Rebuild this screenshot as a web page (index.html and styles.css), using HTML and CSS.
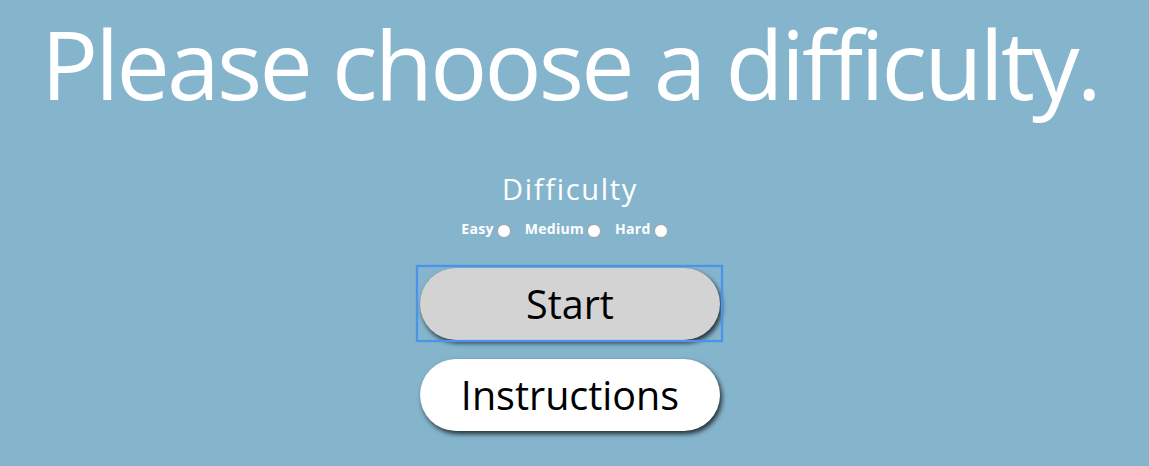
FILE: index.html
```html
<!DOCTYPE html>
<html>
<head>
<meta charset="utf-8">
<link rel="stylesheet" href="styles.css">
</head>
<body>
<main class="page">
  <h1 class="title">Please choose a difficulty.</h1>
  <section class="difficulty">
    <h2 class="difficulty-heading">Difficulty</h2>
    <div class="options">
      <label class="option">Easy<span class="radio"></span></label>
      <label class="option">Medium<span class="radio"></span></label>
      <label class="option">Hard<span class="radio"></span></label>
    </div>
  </section>
  <div class="buttons">
    <button class="btn btn-start">Start</button>
    <button class="btn btn-instructions">Instructions</button>
  </div>
</main>
</body>
</html>
```

FILE: styles.css
```css
html, body {
  margin: 0;
  padding: 0;
  height: 100%;
  background: #85b5cd;
  overflow: hidden;
}
.page {
  font-family: "Open Sans", "DejaVu Sans", sans-serif;
  display: flex;
  flex-direction: column;
  align-items: center;
  color: #fff;
  padding-right: 9px;
}
.title {
  margin: 8px 0 0;
  font-size: 95px;
  font-weight: 400;
  line-height: 110px;
  letter-spacing: -2.8px;
  white-space: nowrap;
}
.difficulty {
  display: flex;
  flex-direction: column;
  align-items: center;
  margin-top: 54px;
}
.difficulty-heading {
  margin: 0;
  font-size: 29px;
  font-weight: 400;
  line-height: 34px;
  letter-spacing: 1.7px;
}
.options {
  display: flex;
  gap: 14px;
  margin-top: 15px;
  padding-right: 11px;
}
.option {
  display: flex;
  align-items: flex-start;
  font-size: 14px;
  font-weight: 700;
  line-height: 16px;
  letter-spacing: 0.3px;
}
.radio {
  width: 14px;
  height: 14px;
  border-radius: 50%;
  background: #fff;
  border: 1px solid #a0a0a0;
  box-sizing: border-box;
  margin-left: 3px;
  margin-top: 3px;
}
.buttons {
  display: flex;
  flex-direction: column;
  gap: 19px;
  margin-top: 30px;
}
.btn {
  position: relative;
  width: 300px;
  height: 72px;
  border: none;
  border-radius: 36px;
  font-family: "Open Sans", "DejaVu Sans", sans-serif;
  font-size: 39.5px;
  color: #000;
  box-shadow: 2px 3px 5px rgba(0,0,0,0.75);
  padding: 0;
  outline: none;
}
.btn-start {
  background: #d3d3d3;
}
.btn-start::before {
  content: "";
  position: absolute;
  left: -4px;
  top: -3px;
  right: -3px;
  bottom: -2px;
  border: 2px solid #4a92ea;
  box-shadow: 0 0 1px #4a92ea, inset 0 0 1px #4a92ea;
  pointer-events: none;
}
.btn-instructions {
  background: #fff;
}
```
